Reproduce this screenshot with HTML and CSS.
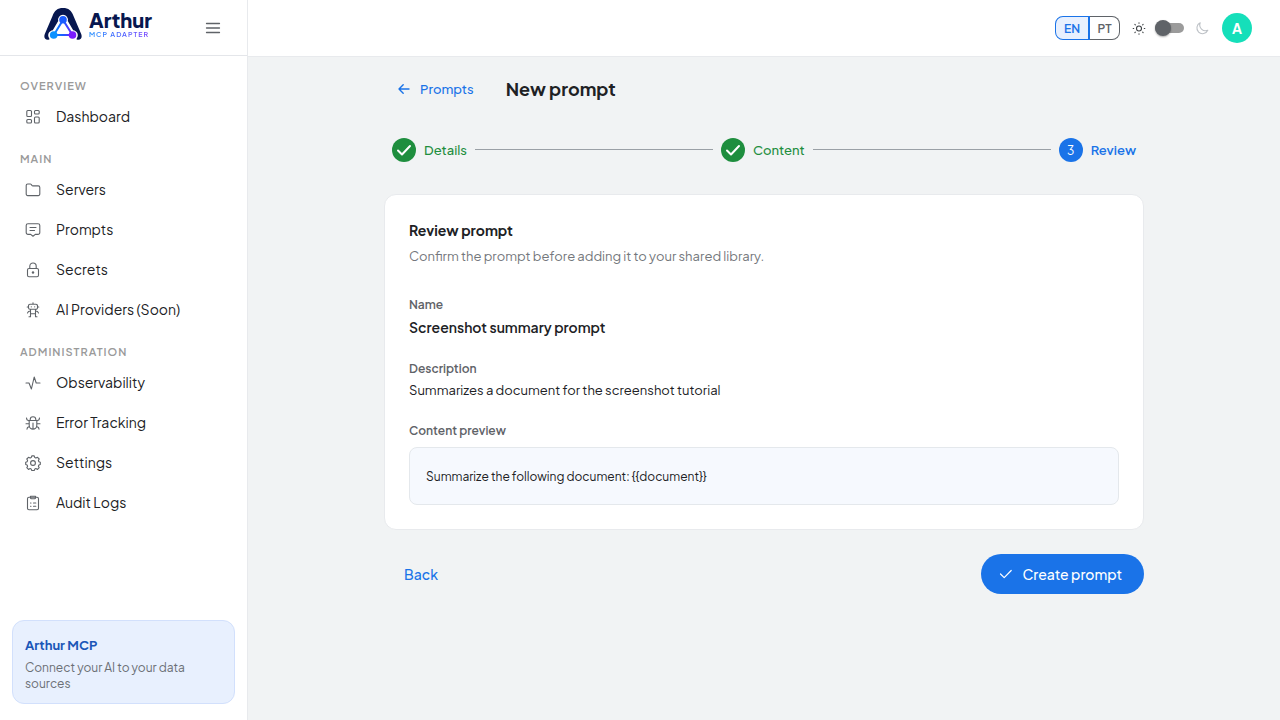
FILE: index.html
```html
<!DOCTYPE html>
<html lang="en">
<head>
<meta charset="utf-8">
<meta name="viewport" content="width=device-width, initial-scale=1">
<title>New prompt – Arthur MCP Adapter</title>
<link rel="stylesheet" href="styles.css">
</head>
<body>
<div class="app">
  <aside class="sidebar">
    <div class="brand-bar">
      <a class="brand" href="#" aria-label="Arthur MCP Adapter">
        <svg class="brand-mark" viewBox="0 0 38 32" aria-hidden="true">
          <defs><linearGradient id="edge" gradientUnits="userSpaceOnUse" x1="8" y1="0" x2="30" y2="0"><stop offset="0" stop-color="#0a91ff"/><stop offset=".5" stop-color="#1a5cff"/><stop offset="1" stop-color="#7a1cff"/></linearGradient></defs>
          <path d="M19 0C13.500 0 10.500 2.600 8.500 8L.8 26C-.5 29.500 1 32 4.200 31.700Q5.500 31.600 6 30.800H32Q32.500 31.600 33.800 31.700C37 32 38.500 29.500 37.200 26L29.500 8C27.500 2.600 24.500 0 19 0Z" fill="#07174f"/>
          <path d="M19 6.700a5 5 0 0 0-4.800 6.200L8.800 22.300A5 5 0 0 0 5 30l1 2h26l1-2a5 5 0 0 0-3.800-7.700L23.800 12.900A5 5 0 0 0 19 6.700Z" fill="#fff"/>
          <path d="M19 12 9.800 27H28.500Z" fill="none" stroke="url(#edge)" stroke-width="2"/>
          <circle cx="19" cy="11.800" r="3.800" fill="#1a5cff"/><circle cx="9.700" cy="27" r="3.800" fill="#0a91ff"/><circle cx="28.500" cy="27" r="3.800" fill="#7a1cff"/>
        </svg>
        <span class="brand-text"><span class="brand-name">Arthur</span><span class="brand-sub">MCP ADAPTER</span></span>
      </a>
      <button class="menu-button" type="button" aria-label="Toggle menu"><svg class="icon" viewBox="0 0 16 16"><path d="M1.500 3.500h13M1.500 8h13M1.500 12.500h13"/></svg></button>
    </div>
    <nav class="nav" aria-label="Main navigation">
      <h2 class="nav-label">OVERVIEW</h2>
      <a class="nav-item" href="#"><svg class="icon" viewBox="0 0 16 16"><rect x="1.800" y="1.500" width="4.700" height="6" rx="1"/><rect x="9.500" y="1.500" width="4.700" height="3.500" rx="1"/><rect x="1.800" y="10.500" width="4.700" height="3.500" rx="1"/><rect x="9.500" y="8" width="4.700" height="6" rx="1"/></svg>Dashboard</a>
      <h2 class="nav-label">MAIN</h2>
      <a class="nav-item" href="#"><svg class="icon" viewBox="0 0 16 16"><path d="M1.200 3.500a1.500 1.500 0 0 1 1.500-1.500h2.600q.6 0 1 .5l.6.900q.4.500 1 .5h5.400a1.500 1.500 0 0 1 1.500 1.500v6.700a1.500 1.500 0 0 1-1.500 1.500H2.700a1.500 1.500 0 0 1-1.500-1.500Z"/></svg>Servers</a>
      <a class="nav-item" href="#"><svg class="icon" viewBox="0 0 16 16"><path d="M3 1.800h10a1.800 1.800 0 0 1 1.800 1.800v7A1.800 1.800 0 0 1 13 12.400h-2.700L8 14.200l-2.300-1.800H3a1.800 1.800 0 0 1-1.800-1.800v-7A1.800 1.800 0 0 1 3 1.800ZM5 5.500h6M5 8.500h4.500"/></svg>Prompts</a>
      <a class="nav-item" href="#"><svg class="icon" viewBox="0 0 16 16"><rect x="2.500" y="6.500" width="11" height="8.200" rx="1.500"/><path d="M4.800 6.500V4.200a3.200 3.200 0 0 1 6.400 0v2.300"/><circle class="dot" cx="8" cy="10.500" r="1.200"/></svg>Secrets</a>
      <a class="nav-item" href="#"><svg class="icon" viewBox="0 0 16 16"><path d="M8 .7v1.600M5 2.300h6a1.500 1.500 0 0 1 1.500 1.500v2A1.500 1.500 0 0 1 11 7.300H5a1.500 1.500 0 0 1-1.500-1.500v-2A1.500 1.500 0 0 1 5 2.300ZM5.500 7.500v7.300M10.500 7.500v7.300M5.500 11.800h5M5.300 9 3.500 9.500 2.500 11M10.700 9l1.800.5 1 1.500M4 14.800h1.500M10.500 14.800H12M3.500 5H2.200M12.500 5h1.300"/><circle class="dot" cx="6.300" cy="4.800" r=".6"/><circle class="dot" cx="9.700" cy="4.800" r=".6"/></svg>AI Providers (Soon)</a>
      <h2 class="nav-label">ADMINISTRATION</h2>
      <a class="nav-item" href="#"><svg class="icon" viewBox="0 0 16 16"><path d="M1 8h3L6.400 14 9.200 2l2 6H15"/></svg>Observability</a>
      <a class="nav-item" href="#"><svg class="icon" viewBox="0 0 16 16"><path d="M4.200 5.500h7.600v4.800a3.800 3.800 0 0 1-7.600 0ZM5.200 5.300V4.500a2.800 2.800 0 0 1 5.600 0v.8M8 8v6M4.200 8.800H1M11.800 8.800H15M4.200 6 2 4.800 1.500 3M11.800 6 14 4.800l.5-1.800M4.500 11.500l-2 1-.5 1.700M11.500 11.500l2 1 .5 1.700"/></svg>Error Tracking</a>
      <a class="nav-item" href="#"><svg class="icon" viewBox="0 0 16 16"><path d="M6.800 1.400h2.400l.6 1.700 1.100.5 1.600-.8 1.700 1.700-.8 1.600.5 1.100 1.400.5v2.400l-1.400.5-.5 1.100.8 1.500-1.700 1.700-1.600-.8-1.100.5-.6 1.400H6.800l-.6-1.400-1.100-.5-1.600.8-1.700-1.700.8-1.500-.5-1.100-1.400-.5V7.700l1.400-.5.5-1.100-.8-1.600 1.700-1.700 1.600.8 1.100-.5Z" transform="translate(0 -.5)"/><circle cx="8" cy="8" r="2.400"/></svg>Settings</a>
      <a class="nav-item" href="#"><svg class="icon" viewBox="0 0 16 16"><rect x="2.500" y="2.200" width="11" height="12.500" rx="1.500"/><path d="M5.500 1.200h5v1.500a1 1 0 0 1-1 1h-3a1 1 0 0 1-1-1ZM5.500 8h.5M8.500 8h2.300M5.500 11.200h.5M8.500 11.200h2.300"/></svg>Audit Logs</a>
    </nav>
    <section class="promo">
      <h2 class="promo-title">Arthur MCP</h2>
      <p class="promo-text">Connect your AI to your data sources</p>
    </section>
  </aside>

  <div class="page">
    <header class="topbar">
      <div class="language" role="group" aria-label="Language">
        <button class="language-option selected" type="button" aria-pressed="true">EN</button>
        <button class="language-option" type="button" aria-pressed="false">PT</button>
      </div>
      <label class="theme">
        <svg class="icon sun" viewBox="0 0 16 16"><circle cx="8" cy="8.500" r="2.500"/><path d="M8 2.700v.5M8 13.800v.5M2.200 8.500h.5M13.300 8.500h.5M3.900 4.400l.4.400M11.700 12.200l.4.400M3.900 12.600l.4-.4M11.700 4.800l.4-.4"/></svg>
        <input class="switch" type="checkbox" role="switch" aria-label="Dark theme">
        <svg class="icon moon" viewBox="0 0 16 16"><path d="M6.200 2.800A5.700 5.700 0 1 0 13.800 10.300 5.800 5.800 0 0 1 6.200 2.800Z"/></svg>
      </label>
      <button class="avatar" type="button" aria-label="Account">A</button>
    </header>

    <main class="content">
      <div class="title-row">
        <a class="back-link" href="#"><svg class="icon" viewBox="0 0 16 16"><path d="M13 8H3M7.200 3.800 3 8l4.200 4.200"/></svg>Prompts</a>
        <h1 class="title">New prompt</h1>
      </div>

      <ol class="stepper">
        <li class="step done"><span class="step-mark"><svg class="icon" viewBox="0 0 16 16" aria-label="Completed"><path d="m2 8.500 4 4 8-8.500"/></svg></span>Details</li>
        <li class="connector" aria-hidden="true"></li>
        <li class="step done"><span class="step-mark"><svg class="icon" viewBox="0 0 16 16" aria-label="Completed"><path d="m2 8.500 4 4 8-8.500"/></svg></span>Content</li>
        <li class="connector" aria-hidden="true"></li>
        <li class="step current" aria-current="step"><span class="step-mark">3</span>Review</li>
      </ol>

      <section class="card">
        <h2 class="card-title">Review prompt</h2>
        <p class="card-intro">Confirm the prompt before adding it to your shared library.</p>
        <dl class="details">
          <div class="field"><dt class="field-label">Name</dt><dd class="field-value strong">Screenshot summary prompt</dd></div>
          <div class="field"><dt class="field-label">Description</dt><dd class="field-value">Summarizes a document for the screenshot tutorial</dd></div>
          <div class="field preview"><dt class="field-label">Content preview</dt><dd class="preview-box">Summarize the following document: {{document}}</dd></div>
        </dl>
      </section>

      <div class="actions">
        <button class="button text" type="button">Back</button>
        <button class="button filled" type="submit"><svg class="icon" viewBox="0 0 16 16"><path d="m2.500 8 3.700 3.700 7-7.200"/></svg>Create prompt</button>
      </div>
    </main>
  </div>
</div>
</body>
</html>
```
FILE: styles.css
```css
* { box-sizing: border-box; }

body {
  margin: 0;
  background: #f1f3f4;
  color: #202124;
  font-family: "Plus Jakarta Sans", Inter, "Open Sans", sans-serif;
  font-size: 14px;
}

h1, h2, p, dl, dd, ol { margin: 0; padding: 0; }
a { color: inherit; text-decoration: none; }
button { font: inherit; cursor: pointer; }

.icon {
  display: block;
  flex: none;
  width: 16px;
  height: 16px;
  fill: none;
  stroke: currentColor;
  stroke-width: 1.1;
  stroke-linecap: round;
  stroke-linejoin: round;
}
.icon .dot { fill: currentColor; stroke: none; }

.app { display: flex; min-height: 100vh; }

/* Sidebar */
.sidebar {
  display: flex;
  flex: none;
  flex-direction: column;
  width: 248px;
  background: #fff;
  border-right: 1px solid #e8eaed;
}
.brand-bar {
  display: flex;
  align-items: center;
  justify-content: space-between;
  height: 56px;
  padding: 0 22px 0 44px;
  border-bottom: 1px solid #e4e6ea;
}
.brand { display: flex; align-items: center; gap: 7px; padding-bottom: 8px; }
.brand-mark { width: 38px; height: 32px; }
.brand-text { display: flex; flex-direction: column; }
.brand-name { color: #07174f; font-size: 20px; font-weight: 800; line-height: 22px; }
.brand-sub {
  background: linear-gradient(90deg, #1a8cff, #7a3cff);
  background-clip: text;
  color: transparent;
  font-size: 7px;
  font-weight: 600;
  letter-spacing: 1px;
  line-height: 8px;
}
.menu-button { padding: 4px; border: 0; background: none; color: #5f6368; }
.menu-button .icon { stroke-width: 1.3; }

.nav { flex: 1; padding: 8px 12px; }
.nav-label {
  padding: 16px 8px 5px;
  color: #9a9a9a;
  font-size: 11px;
  font-weight: 600;
  letter-spacing: 1px;
  line-height: 12px;
}
.nav-item {
  display: flex;
  align-items: center;
  gap: 15px;
  height: 40px;
  padding: 0 13px 2px;
  line-height: 20px;
}
.nav-item .icon { margin-top: 2px; color: #5f6368; }

.promo {
  margin: 0 12px 16px;
  padding: 14px 12px 11px;
  background: #e8f0fe;
  border: 1px solid #d2e0fc;
  border-radius: 12px;
}
.promo-title { color: #1a56b8; font-size: 13px; font-weight: 700; line-height: 20px; }
.promo-text { padding-top: 5px; color: #6b6f75; font-size: 12px; line-height: 16px; }

/* Top bar */
.page { display: flex; flex: 1; flex-direction: column; min-width: 0; }
.topbar {
  display: flex;
  align-items: center;
  justify-content: flex-end;
  height: 57px;
  padding: 0 28px;
  background: #fff;
  border-bottom: 1px solid #e8eaed;
}
.language { display: flex; }
.language-option {
  width: 30px;
  height: 24px;
  padding: 0;
  border: 1px solid #5f6368;
  border-left: 0;
  border-radius: 0 8px 8px 0;
  background: #fff;
  color: #5f6368;
  font-size: 12px;
  font-weight: 600;
}
.language-option.selected {
  width: 35px;
  border: 1px solid #1a73e8;
  border-right-width: 2px;
  border-radius: 8px 0 0 8px;
  background: #e8f0fe;
  color: #1a73e8;
}
.theme { display: flex; align-items: center; gap: 8px; margin: 0 12px 0 11px; }
.sun { color: #3c4043; }
.moon { margin-left: 2px; color: #bdc1c6; }
.switch {
  position: relative;
  appearance: none;
  width: 29px;
  height: 10px;
  margin: 0;
  border-radius: 5px;
  background: #9b9b9b;
  cursor: pointer;
}
.switch::before {
  content: "";
  position: absolute;
  top: -3px;
  left: 0;
  width: 16px;
  height: 16px;
  border-radius: 50%;
  background: #5f6368;
  box-shadow: 0 1px 2px #0005;
}
.avatar {
  width: 30px;
  height: 30px;
  padding: 0;
  border: 0;
  border-radius: 50%;
  background: #15dfba;
  color: #fff;
  font-weight: 700;
}

/* Wizard */
.content { width: 100%; max-width: 760px; margin: 0 auto; padding: 16px 0 24px; }
.title-row { display: flex; align-items: center; gap: 32px; height: 32px; padding-left: 12px; }
.back-link { display: flex; align-items: center; gap: 8px; color: #1a73e8; font-size: 13px; font-weight: 500; }
.back-link .icon { stroke-width: 1.4; }
.title { font-size: 18px; font-weight: 700; line-height: 26px; }

.stepper { display: flex; align-items: center; margin: 33px 0 32px; padding: 0 8px; list-style: none; }
.step { display: flex; align-items: center; gap: 8px; font-size: 13px; font-weight: 500; }
.step-mark {
  display: grid;
  place-items: center;
  width: 24px;
  height: 24px;
  border-radius: 50%;
  color: #fff;
  font-size: 12px;
  font-weight: 400;
}
.step-mark .icon { stroke-width: 2; }
.done { color: #1e8e3e; }
.done .step-mark { background: #1e8e3e; }
.current { color: #1a73e8; font-weight: 600; }
.current .step-mark { background: #1a73e8; }
.connector { flex: 1; height: 1px; margin: 0 8px 1px; background: #9aa0a6; }

.card {
  padding: 24px;
  background: #fff;
  border: 1px solid #e8eaed;
  border-radius: 12px;
}
.card-title { font-size: 14px; font-weight: 700; line-height: 22px; }
.card-intro { padding-top: 6px; color: #74777c; font-size: 13px; line-height: 18px; }
.details { display: flex; flex-direction: column; gap: 24px; padding-top: 32px; }
.field { display: flex; flex-direction: column; gap: 4px; }
.field-label { color: #5f6368; font-size: 12px; font-weight: 600; line-height: 16px; }
.field-value { font-size: 13px; line-height: 18px; }
.field-value.strong { font-size: 14px; font-weight: 600; line-height: 20px; }
.preview { gap: 8px; }
.preview-box {
  padding: 17px 16px 15px;
  background: #f6f9fe;
  border: 1px solid #e4e8ec;
  border-radius: 8px;
  font-size: 12px;
  line-height: 24px;
}

.actions { display: flex; justify-content: space-between; margin-top: 24px; }
.button {
  display: flex;
  align-items: center;
  gap: 8px;
  height: 40px;
  border: 0;
  border-radius: 20px;
  font-weight: 500;
}
.button.text { padding: 0 20px; background: none; color: #1a73e8; }
.button.filled { padding: 0 22px 0 17px; background: #1a73e8; color: #fff; }
.button .icon { stroke-width: 1.2; }
```
